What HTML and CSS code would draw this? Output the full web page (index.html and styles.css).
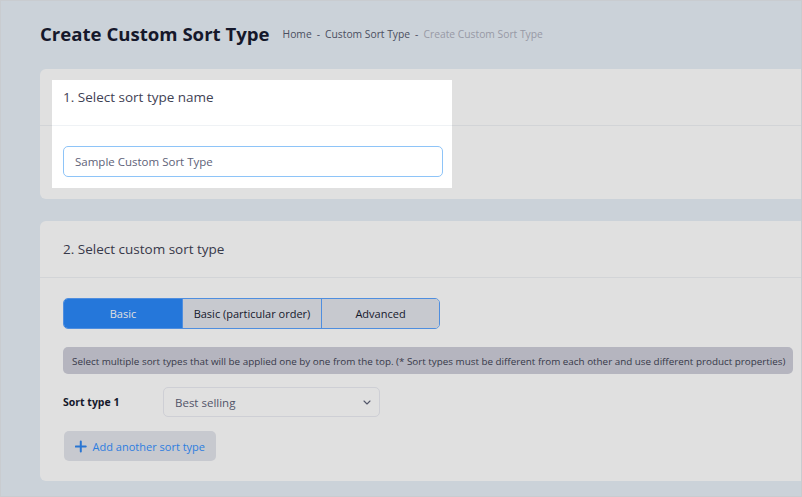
FILE: index.html
```html
<!DOCTYPE html>
<html lang="en">
<head>
<meta charset="utf-8">
<title>Create Custom Sort Type</title>
<link rel="stylesheet" href="styles.css">
</head>
<body>
<div class="frame">
  <div class="toolbar">
    <h1 class="page-title">Create Custom Sort Type</h1>
    <nav class="breadcrumb">
      <span class="crumb">Home</span>
      <span class="sep">-</span>
      <span class="crumb">Custom Sort Type</span>
      <span class="sep">-</span>
      <span class="crumb current">Create Custom Sort Type</span>
    </nav>
  </div>

  <section class="card card-name">
    <div class="card-header">1. Select sort type name</div>
    <div class="card-body">
      <input class="text-input" type="text" value="Sample Custom Sort Type">
    </div>
    <div class="spotlight"></div>
  </section>

  <section class="card">
    <div class="card-header">2. Select custom sort type</div>
    <div class="card-body">
      <div class="tabs">
        <button class="tab active">Basic</button>
        <button class="tab wide">Basic (particular order)</button>
        <button class="tab">Advanced</button>
      </div>
      <div class="notice">Select multiple sort types that will be applied one by one from the top. (* Sort types must be different from each other and use different product properties)</div>
      <div class="sort-row">
        <label class="sort-label">Sort type 1</label>
        <div class="select">
          <span>Best selling</span>
          <svg class="chev" viewBox="0 0 8 5" width="8" height="5"><path d="M1 1l3 3 3-3" fill="none" stroke="#5e6278" stroke-width="1.1" stroke-linecap="round" stroke-linejoin="round"/></svg>
        </div>
      </div>
      <button class="add-btn">
        <svg viewBox="0 0 14 14" width="13" height="13"><path d="M7 1v12M1 7h12" stroke="#2f86f0" stroke-width="2.4" stroke-linecap="round"/></svg>
        <span>Add another sort type</span>
      </button>
    </div>
  </section>
</div>
</body>
</html>
```
FILE: styles.css
```css
* { box-sizing: border-box; }
html, body { margin: 0; padding: 0; }
body {
  font-family: "Open Sans", "Liberation Sans", sans-serif;
  color: #3f4254;
  background: #e8eff7;
}
.frame {
  width: 802px;
  height: 497px;
  border: 1px solid #c9ccd0;
  overflow: hidden;
  background: #e8eff7;
  position: relative;
}
.toolbar {
  height: 64px;
  margin-bottom: 4px;
  display: flex;
  align-items: center;
  padding-left: 39px;
  gap: 13px;
}
.page-title {
  margin: 0;
  font-size: 18.6px;
  font-weight: 700;
  color: #181c32;
}
.breadcrumb {
  display: flex;
  align-items: center;
  gap: 5px;
  font-size: 10.3px;
  color: #555a6e;
  padding-top: 2px;
}
.breadcrumb .current { color: #adb0bd; }
.card {
  position: relative;
  margin-left: 39px;
  width: 776px;
  background: #ffffff;
  border-radius: 6px;
  margin-bottom: 22px;
}
.card-header {
  height: 57px;
  display: flex;
  align-items: center;
  padding: 0 23px;
  border-bottom: 1px solid #eff2f5;
  font-size: 13.5px;
  font-weight: 500;
  color: #3f4254;
}
.card-body { padding: 20px 23px 20px; }
.card-name .card-body { padding-bottom: 22px; }
.text-input {
  display: block;
  width: 380px;
  height: 31px;
  border: 1px solid #8ec4f8;
  border-radius: 5px;
  padding: 0 11px;
  font-family: inherit;
  font-size: 11.5px;
  color: #5e6278;
  background: #fff;
  outline: none;
}
.spotlight {
  position: absolute;
  left: 12px;
  top: 11px;
  width: 400px;
  height: 108px;
  box-shadow: 0 0 0 3000px rgba(0, 0, 0, 0.12);
  z-index: 10;
  pointer-events: none;
}
.tabs {
  display: flex;
  width: 377px;
  height: 31px;
  border: 1px solid #5aa2fe;
  border-radius: 5px;
  overflow: hidden;
}
.tab {
  flex: 0 0 118px;
  border: 0;
  border-left: 1px solid #5aa2fe;
  background: #e3e5ec;
  font-family: inherit;
  font-size: 11px;
  color: #181c32;
  padding: 0;
}
.tab.wide { flex: 1 1 auto; }
.tab.active {
  border-left: 0;
  background: #2b88f9;
  color: #ffffff;
}
.notice {
  margin-top: 18px;
  height: 27px;
  display: flex;
  align-items: center;
  padding: 0 9px;
  background: #cecfda;
  border-radius: 5px;
  font-size: 9.85px;
  color: #3f4254;
  white-space: nowrap;
}
.sort-row {
  margin-top: 13px;
  display: flex;
  align-items: center;
}
.sort-label {
  width: 100px;
  font-size: 10.5px;
  font-weight: 700;
  color: #181c32;
}
.select {
  width: 217px;
  height: 30px;
  border: 1px solid #ebecf3;
  border-radius: 5px;
  display: flex;
  align-items: center;
  justify-content: space-between;
  padding: 0 8px 0 11px;
  font-size: 11.5px;
  color: #5e6278;
}
.add-btn {
  margin-top: 14px;
  margin-left: 1px;
  display: flex;
  align-items: center;
  gap: 6px;
  height: 30px;
  width: 152px;
  padding: 0 11px;
  border: 0;
  border-radius: 5px;
  background: #e3e5ec;
  font-family: inherit;
  font-size: 11px;
  color: #3490ff;
  white-space: nowrap;
}
```
